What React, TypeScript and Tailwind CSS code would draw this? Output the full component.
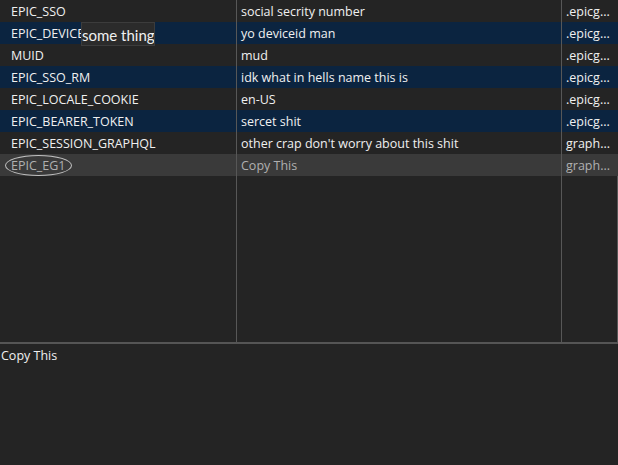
import React from 'react';

const rows = [
  { name: 'EPIC_SSO', value: 'social secrity number', domain: '.epicg...' },
  { name: 'EPIC_DEVICE', value: 'yo deviceid man', domain: '.epicg...' },
  { name: 'MUID', value: 'mud', domain: '.epicg...' },
  { name: 'EPIC_SSO_RM', value: 'idk what in hells name this is', domain: '.epicg...' },
  { name: 'EPIC_LOCALE_COOKIE', value: 'en-US', domain: '.epicg...' },
  { name: 'EPIC_BEARER_TOKEN', value: 'sercet shit', domain: '.epicg...' },
  { name: 'EPIC_SESSION_GRAPHQL', value: "other crap don't worry about this shit", domain: 'graph...' },
  { name: 'EPIC_EG1', value: 'Copy This', domain: 'graph...' },
];

export default function App() {
  return (
    <div
      className="w-[618px] h-[465px] bg-[#242424] text-[#f0f0f0] text-[12.5px] overflow-hidden flex flex-col relative"
      style={{ fontFamily: '"Open Sans", "Noto Sans", sans-serif' }}
    >
      {/* Table */}
      <div className="h-[342px] flex flex-col">
        {rows.map((r, i) => {
          const selected = i === rows.length - 1;
          const bg = selected ? 'bg-[#3a3a3a] text-[#b0b0b0]' : i % 2 === 1 ? 'bg-[#0b2440]' : 'bg-[#242424]';
          return (
            <div key={r.name} className={`grid grid-cols-[237px_325px_1fr] h-[22px] leading-[21px] ${bg}`}>
              <div className="border-r border-[#575757] pl-[11px] pt-px whitespace-nowrap overflow-hidden relative">
                {r.name}
                {selected && (
                  <span className="absolute left-[5px] top-[1px] w-[67px] h-[21px] rounded-[50%] border border-[#c0c0c0]" />
                )}
              </div>
              <div className="border-r border-[#575757] pl-[4px] pt-px whitespace-nowrap overflow-hidden">{r.value}</div>
              <div className="pl-[4px] pt-px whitespace-nowrap overflow-hidden">{r.domain}</div>
            </div>
          );
        })}
        <div className="flex-1 grid grid-cols-[237px_325px_1fr]">
          <div className="border-r border-[#575757]" />
          <div className="border-r border-[#575757]" />
          <div className="border-r border-[#575757]" />
        </div>
      </div>

      <div className="h-[2px] bg-[#555555]" />

      {/* Detail pane */}
      <div className="flex-1 pl-[1px] pt-[3px] leading-[18px]">Copy This</div>

      {/* Tooltip */}
      <div
        className="absolute left-[81px] top-[22px] w-[74px] h-[24px] bg-[#2b2b2b] border border-[#3c3c3c] text-[15px] leading-[24px] whitespace-nowrap overflow-hidden text-[#f0f0f0]"
        style={{ fontFamily: 'Lato, sans-serif' }}
      >
        some thing
      </div>
    </div>
  );
}
